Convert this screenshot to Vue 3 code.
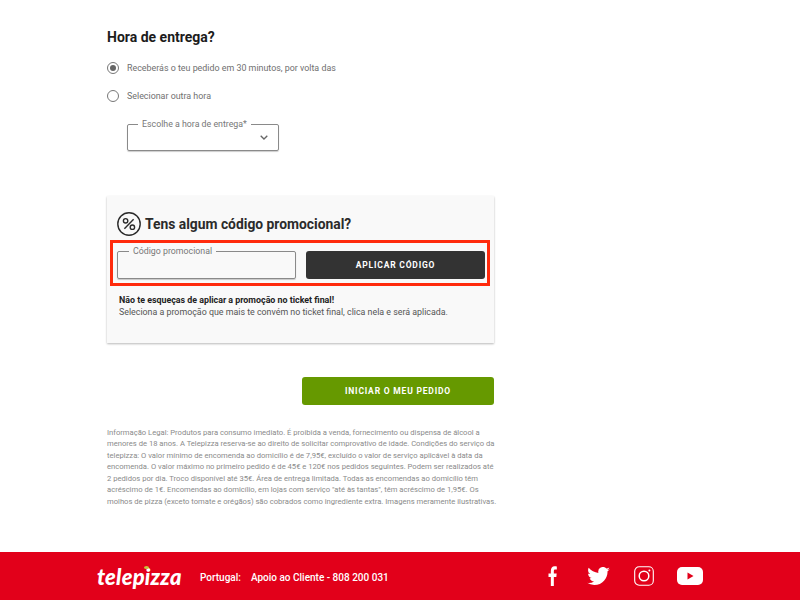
<script setup>
const legalLines = [
  'Informação Legal: Produtos para consumo imediato. É proibida a venda, fornecimento ou dispensa de álcool a',
  'menores de 18 anos. A Telepizza reserva-se ao direito de solicitar comprovativo de idade. Condições do serviço da',
  'telepizza: O valor mínimo de encomenda ao domicílio é de 7,95€, excluído o valor de serviço aplicável à data da',
  'encomenda. O valor máximo no primeiro pedido é de 45€ e 120€ nos pedidos seguintes. Podem ser realizados até',
  '2 pedidos por dia. Troco disponível até 35€. Área de entrega limitada. Todas as encomendas ao domicílio têm',
  'acréscimo de 1€. Encomendas ao domicílio, em lojas com serviço "até às tantas", têm acréscimo de 1,95€. Os',
  'molhos de pizza (exceto tomate e orégãos) são cobrados como ingrediente extra. Imagens meramente ilustrativas.'
]
</script>

<template>
  <div class="page">
    <main class="main">
      <h2 class="title">Hora de entrega?</h2>

      <div class="radio-row first">
        <span class="radio on"><span class="dot"></span></span>
        <span>Receberás o teu pedido em 30 minutos, por volta das</span>
      </div>
      <div class="radio-row second">
        <span class="radio"></span>
        <span>Selecionar outra hora</span>
      </div>

      <div class="field select-field">
        <span class="legend">Escolhe a hora de entrega*</span>
        <svg class="chevron" width="8" height="5" viewBox="0 0 8 5">
          <path d="M.7.7L4 4l3.300-3.300" fill="none" stroke="#666" stroke-width="1.300" />
        </svg>
      </div>

      <section class="promo">
        <div class="promo-head">
          <svg width="24" height="24" viewBox="0 0 24 24" fill="none" stroke="#2b2b2b" stroke-width="1.400">
            <circle cx="12" cy="12" r="11.200" />
            <circle cx="8.600" cy="8.800" r="2.200" />
            <circle cx="15.400" cy="15.200" r="2.200" />
            <path d="M16.600 7.200L7.400 16.800" />
          </svg>
          <h3>Tens algum código promocional?</h3>
        </div>

        <div class="promo-form">
          <div class="field code-field">
            <span class="legend">Código promocional</span>
          </div>
          <button class="btn dark">APLICAR CÓDIGO</button>
        </div>

        <p class="note">
          <strong>Não te esqueças de aplicar a promoção no ticket final!</strong><br />
          Seleciona a promoção que mais te convém no ticket final, clica nela e será aplicada.
        </p>
      </section>

      <div class="actions">
        <button class="btn green">INICIAR O MEU PEDIDO</button>
      </div>

      <div class="legal">
        <div v-for="line in legalLines" :key="line">{{ line }}</div>
      </div>
    </main>

    <footer class="footer">
      <span class="logo">telepizza<span class="logo-dot"></span></span>
      <span class="country">Portugal:</span>
      <span class="support">Apoio ao Cliente - 808 200 031</span>

      <div class="social">
        <svg class="fb" width="10" height="20" viewBox="0 0 12 20" preserveAspectRatio="none" fill="#fff">
          <path d="M3.400 20V11H.6V7.400h2.800V5C3.400 1.900 5.200.3 7.800.3c1.200 0 2.300.1 2.800.2v3.100H8.700c-1.400 0-1.700.7-1.700 1.700v2.100h3.400L10 11H7v9z" />
        </svg>
        <svg class="tw" width="23" height="19" viewBox="0 0 24 20" fill="#fff">
          <path d="M24 2.400c-.9.400-1.800.7-2.800.8 1-.6 1.800-1.600 2.200-2.700-1 .6-2 1-3.100 1.200A4.900 4.900 0 0 0 11.900 6.200C7.800 6 4.200 4 1.700.9c-1.300 2.200-.6 5.100 1.500 6.500-.8 0-1.600-.2-2.200-.6 0 2.300 1.600 4.400 3.900 4.900-.7.200-1.500.2-2.200.1.600 2 2.400 3.400 4.600 3.400A9.900 9.900 0 0 1 0 16.700 14 14 0 0 0 7.500 19c9.100 0 14.300-7.700 14-14.600 1-.7 1.800-1.500 2.500-2z" />
        </svg>
        <svg class="ig" width="20" height="20" viewBox="0 0 20 20" fill="none" stroke="#fff" stroke-width="1.100">
          <rect x=".7" y=".7" width="18.600" height="18.600" rx="4.500" />
          <circle cx="10" cy="10" r="4.800" stroke-width="1.500" />
          <circle cx="15.400" cy="4.600" r="1" fill="#fff" stroke="none" />
        </svg>
        <svg class="yt" width="26" height="18" viewBox="0 0 26 18">
          <rect width="26" height="18" rx="5" fill="#fff" />
          <path d="M10.500 5.500l6 3.500-6 3.500z" fill="#e2001a" />
        </svg>
      </div>
    </footer>
  </div>
</template>

<style>
body {
  margin: 0;
  background: #fff;
}
</style>

<style scoped>
.page {
  width: 800px;
  height: 600px;
  display: flex;
  flex-direction: column;
  overflow: hidden;
  font-family: Roboto, "Liberation Sans", sans-serif;
}

.main {
  flex: 1;
  width: 387px;
  margin-left: 107px;
  padding-top: 29px;
  box-sizing: border-box;
}

.title {
  margin: 0;
  font-size: 14px;
  line-height: 16px;
  font-weight: 700;
  color: #1c1c1c;
}

.radio-row {
  display: flex;
  align-items: center;
  gap: 8px;
  font-size: 8.900px;
  line-height: 12px;
  color: #6f6f6f;
}

.radio-row.first {
  margin-top: 17px;
}

.radio-row.second {
  margin-top: 16px;
}

.radio {
  width: 10px;
  height: 10px;
  border: 1px solid #777;
  border-radius: 50%;
  display: flex;
  align-items: center;
  justify-content: center;
}

.dot {
  width: 6px;
  height: 6px;
  border-radius: 50%;
  background: #666;
}

.field {
  position: relative;
  box-sizing: border-box;
  border: 1px solid #8a8a8a;
  border-radius: 2px;
  box-shadow: 0 1px 1px rgba(0, 0, 0, 0.2);
}

.select-field {
  width: 152px;
  height: 27px;
  margin: 22px 0 0 20px;
}

.legend {
  position: absolute;
  top: -6px;
  left: 10px;
  padding: 0 4px;
  font-size: 8.800px;
  line-height: 11px;
  white-space: nowrap;
  color: #777;
  background: #fff;
}

.chevron {
  position: absolute;
  right: 10px;
  top: 10px;
}

.promo {
  margin-top: 45px;
  height: 147px;
  box-sizing: border-box;
  background: #f9f9f9;
  box-shadow: 0 1px 2px rgba(0, 0, 0, 0.28);
  padding: 16px 10px 0;
}

.promo-head {
  display: flex;
  align-items: center;
  gap: 4px;
}

.promo-head h3 {
  margin: 0;
  font-size: 13.850px;
  font-weight: 700;
  color: #2b2b2b;
}

.promo-form {
  display: flex;
  gap: 10px;
  box-sizing: border-box;
  width: 380px;
  height: 46px;
  margin: 4px 0 0 -7px;
  padding: 8px 2px 2px 4px;
  border: 3px solid #ff2a0c;
}

.code-field {
  width: 179px;
  height: 28px;
  flex: none;
}

.code-field .legend {
  left: 11px;
  background: #f9f9f9;
}

.btn {
  border: none;
  border-radius: 3px;
  font-family: inherit;
  font-weight: 700;
  color: #fff;
  letter-spacing: 0.8px;
  padding: 0;
}

.dark {
  width: 179px;
  height: 28px;
  flex: none;
  background: #333;
  font-size: 8.500px;
}

.note {
  margin: 8px 0 0 2px;
  font-size: 8.850px;
  line-height: 12px;
  color: #555;
}

.note strong {
  color: #222;
}

.actions {
  display: flex;
  justify-content: flex-end;
  margin-top: 34px;
}

.green {
  width: 192px;
  height: 28px;
  background: #669900;
  font-size: 8.500px;
}

.legal {
  margin-top: 22px;
  font-size: 7.630px;
  line-height: 11.440px;
  color: #8a8a8a;
  white-space: nowrap;
}

.footer {
  flex: none;
  height: 48px;
  background: #e2001a;
  color: #fff;
  display: flex;
  align-items: center;
  padding-left: 97px;
  box-sizing: border-box;
}

.logo {
  position: relative;
  width: 103px;
  font-family: Lato, sans-serif;
  font-style: italic;
  font-weight: 900;
  font-size: 22px;
  letter-spacing: 0.2px;
}

.logo-dot {
  position: absolute;
  left: 47px;
  top: 3px;
  width: 5px;
  height: 3px;
  border-radius: 50%;
  background: #c9c23a;
}

.country {
  font-size: 10px;
  font-weight: 500;
  position: relative;
  top: 1px;
}

.support {
  margin-left: 10px;
  font-size: 10px;
  font-weight: 500;
  position: relative;
  top: 1px;
}

.social {
  margin-left: auto;
  margin-right: 97px;
  display: flex;
  align-items: center;
}

.tw {
  margin-left: 29px;
}

.ig {
  margin-left: 24px;
}

.yt {
  margin-left: 23px;
}
</style>
